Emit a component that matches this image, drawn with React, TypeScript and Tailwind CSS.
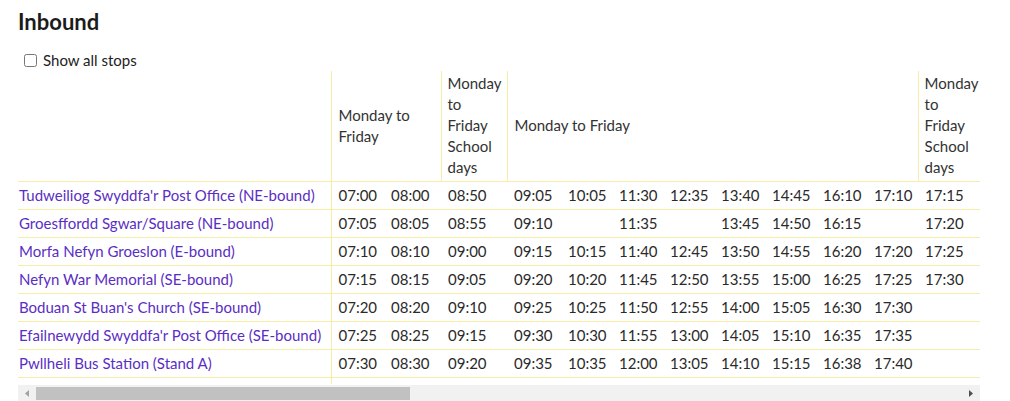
import React from "react"

const stops = [
  "Tudweiliog Swyddfa'r Post Office (NE-bound)",
  "Groesffordd Sgwar/Square (NE-bound)",
  "Morfa Nefyn Groeslon (E-bound)",
  "Nefyn War Memorial (SE-bound)",
  "Boduan St Buan's Church (SE-bound)",
  "Efailnewydd Swyddfa'r Post Office (SE-bound)",
  "Pwllheli Bus Station (Stand A)",
]

const times = [
  ["07:00", "08:00", "08:50", "09:05", "10:05", "11:30", "12:35", "13:40", "14:45", "16:10", "17:10", "17:15"],
  ["07:05", "08:05", "08:55", "09:10", "", "11:35", "", "13:45", "14:50", "16:15", "", "17:20"],
  ["07:10", "08:10", "09:00", "09:15", "10:15", "11:40", "12:45", "13:50", "14:55", "16:20", "17:20", "17:25"],
  ["07:15", "08:15", "09:05", "09:20", "10:20", "11:45", "12:50", "13:55", "15:00", "16:25", "17:25", "17:30"],
  ["07:20", "08:20", "09:10", "09:25", "10:25", "11:50", "12:55", "14:00", "15:05", "16:30", "17:30", ""],
  ["07:25", "08:25", "09:15", "09:30", "10:30", "11:55", "13:00", "14:05", "15:10", "16:35", "17:35", ""],
  ["07:30", "08:30", "09:20", "09:35", "10:35", "12:00", "13:05", "14:10", "15:15", "16:38", "17:40", ""],
]

const colWidths = [313, 53, 57, 66, 54, 51, 51, 51, 51, 51, 51, 51, 66]

export default function App() {
  return (
    <div className="min-h-screen bg-white px-[18px] pt-[7px] text-[#333] font-['Lato','Liberation_Sans',sans-serif]">
      <h2 className="text-[22px] leading-[30px] font-bold text-[#1b1b1b]">Inbound</h2>

      {/* Show all stops toggle */}
      <label className="flex items-center gap-[6px] pl-[6px] mt-[12px] h-[22px] text-[15px] text-[#222]">
        <input type="checkbox" className="m-0 w-[13px] h-[13px]" />
        Show all stops
      </label>

      {/* Timetable */}
      <div className="w-[962px] overflow-hidden">
        <table className="table-fixed border-collapse text-[15px] leading-[21px]" style={{ width: 966 }}>
          <colgroup>
            {colWidths.map((w, i) => (
              <col key={i} style={{ width: w }} />
            ))}
          </colgroup>
          <thead>
            <tr className="border-b border-[#f6eda6] align-middle text-left font-normal">
              <th className="border-r border-[#f6eda6] h-[110px]" />
              <th colSpan={2} className="font-normal px-[7px] py-[2px] border-l border-[#f6eda6]">
                Monday to Friday
              </th>
              <th className="font-normal px-[6px] py-[2px] border-l border-[#f6eda6]">
                Monday to Friday School days
              </th>
              <th colSpan={8} className="font-normal px-[7px] py-[2px] border-l border-[#f6eda6]">
                Monday to Friday
              </th>
              <th className="font-normal px-[6px] py-[2px] border-l border-[#f6eda6]">
                Monday to Friday School days
              </th>
            </tr>
          </thead>
          <tbody>
            {stops.map((stop, r) => (
              <tr key={stop} className="border-b border-[#f6eda6] h-[28px]">
                <td className="pl-[1px] py-[3px] border-r border-[#f6eda6] whitespace-nowrap">
                  <a href="#" className="text-[#5a2ec4]">{stop}</a>
                </td>
                {times[r].map((t, c) => (
                  <td key={c} className="pl-[7px] py-[3px] whitespace-nowrap text-[#2a2a2a]">
                    {t}
                  </td>
                ))}
              </tr>
            ))}
            <tr className="h-[7px]">
              <td className="border-r border-[#f6eda6] p-0" />
              <td colSpan={12} className="p-0" />
            </tr>
          </tbody>
        </table>
      </div>

      {/* Horizontal scrollbar */}
      <div className="flex w-[962px] h-[17px] mt-[1px] bg-[#f1f1f1]">
        <div className="w-[18px] flex items-center justify-center">
          <svg width="4" height="7" viewBox="0 0 4 7">
            <polygon points="4,0 0,3.5 4,7" fill="#a3a3a3" />
          </svg>
        </div>
        <div className="flex-1 flex items-center">
          <div className="w-[374px] h-[13px] bg-[#c1c1c1]" />
        </div>
        <div className="w-[18px] flex items-center justify-center">
          <svg width="4" height="7" viewBox="0 0 4 7">
            <polygon points="0,0 4,3.5 0,7" fill="#505050" />
          </svg>
        </div>
      </div>
    </div>
  )
}
